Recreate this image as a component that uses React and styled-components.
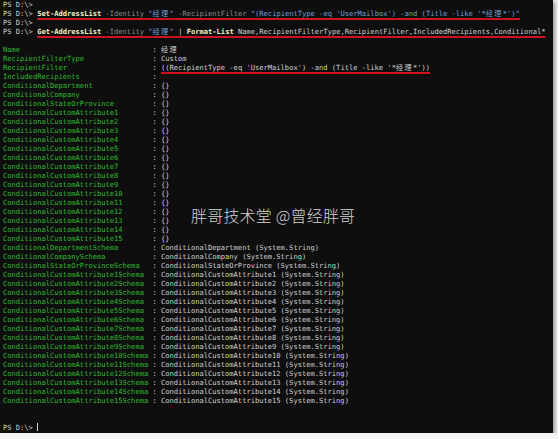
import React from "react";
import styled, { createGlobalStyle } from "styled-components";

const GlobalStyle = createGlobalStyle`
  html, body {
    margin: 0;
    padding: 0;
    background: #f4f4f4;
  }
`;

const Window = styled.div`
  position: relative;
  width: 553px;
  height: 433px;
  background: #0e0e0e;
  box-shadow: 2px 2px 4px rgba(0, 0, 0, 0.4);
  overflow: hidden;
`;

const Screen = styled.div`
  display: flex;
  flex-direction: column;
  padding: 0 0 0 3px;
  font-family: "DejaVu Sans Mono", "Noto Sans CJK SC", monospace;
  font-size: 7.1px;
  line-height: 9px;
  color: #d0d0d0;
  white-space: pre;
  font-kerning: none;
`;

const Line = styled.div`
  height: 9px;
`;

const Row = styled.div`
  display: grid;
  grid-template-columns: 35ch 2ch auto;
  height: 9px;
`;

const Label = styled.span`
  color: #2fba2f;
`;

const Colon = styled.span`
  color: #cccccc;
`;

const Cmd = styled.span`
  color: #f3f0c4;
  font-weight: bold;
`;

const Param = styled.span`
  color: #8a8a8a;
`;

const Str = styled.span`
  color: #6f9fd2;
`;

// CJK glyphs take two terminal cells
const Wide = styled.span`
  letter-spacing: calc(2ch - 1em);
`;

const Marked = styled.span`
  text-decoration: underline;
  text-decoration-color: #d0121c;
  text-decoration-thickness: 2px;
  text-underline-offset: 2px;
`;

const Cursor = styled.span`
  display: inline-block;
  width: 1px;
  height: 8px;
  background: #d8d8d8;
  vertical-align: -1px;
`;

const Watermark = styled.div`
  position: absolute;
  left: 191px;
  top: 203px;
  font-family: "Noto Sans CJK SC", sans-serif;
  font-size: 16px;
  font-weight: 300;
  color: #d2d2d2;
  letter-spacing: 0.2px;
`;

const Prompt = "PS D:\\> ";
const filter = "(RecipientType -eq 'UserMailbox') -and (Title -like '*";

const fields = [
  ["Name", <Wide>经理</Wide>],
  ["RecipientFilterType", "Custom"],
  [
    "RecipientFilter",
    <Marked>
      ({filter}
      <Wide>经理</Wide>*'))
    </Marked>,
  ],
  ["IncludedRecipients", ""],
  ["ConditionalDepartment", "{}"],
  ["ConditionalCompany", "{}"],
  ["ConditionalStateOrProvince", "{}"],
  ...Array.from({ length: 15 }, (_, i) => [
    `ConditionalCustomAttribute${i + 1}`,
    "{}",
  ]),
  ["ConditionalDepartmentSchema", "ConditionalDepartment (System.String)"],
  ["ConditionalCompanySchema", "ConditionalCompany (System.String)"],
  [
    "ConditionalStateOrProvinceSchema",
    "ConditionalStateOrProvince (System.String)",
  ],
  ...Array.from({ length: 15 }, (_, i) => [
    `ConditionalCustomAttribute${i + 1}Schema`,
    `ConditionalCustomAttribute${i + 1} (System.String)`,
  ]),
];

const App = () => {
  return (
    <>
      <GlobalStyle />
      <Window>
        <Screen>
          <Line>{Prompt}</Line>
          <Line>
            {Prompt}
            <Marked>
              <Cmd>Set-AddressList</Cmd> <Param>-Identity</Param>{" "}
              <Str>
                "<Wide>经理</Wide>"
              </Str>{" "}
              <Param>-RecipientFilter</Param>{" "}
              <Str>
                "{filter}
                <Wide>经理</Wide>*')"
              </Str>
            </Marked>
          </Line>
          <Line>{Prompt}</Line>
          <Line>
            {Prompt}
            <Marked>
              <Cmd>Get-AddressList</Cmd> <Param>-Identity</Param>{" "}
              <Str>
                "<Wide>经理</Wide>"
              </Str>{" "}
              | <Cmd>Format-List</Cmd>{" "}
              Name,RecipientFilterType,RecipientFilter,IncludedRecipients,Conditional*
            </Marked>
          </Line>
          <Line />
          {fields.map(([name, value]) => (
            <Row key={name}>
              <Label>{name}</Label>
              <Colon>: </Colon>
              <span>{value}</span>
            </Row>
          ))}
          <Line />
          <Line />
          <Line>
            {Prompt}
            <Cursor />
          </Line>
        </Screen>
        <Watermark>胖哥技术堂 @曾经胖哥</Watermark>
      </Window>
    </>
  );
};

export default App;
